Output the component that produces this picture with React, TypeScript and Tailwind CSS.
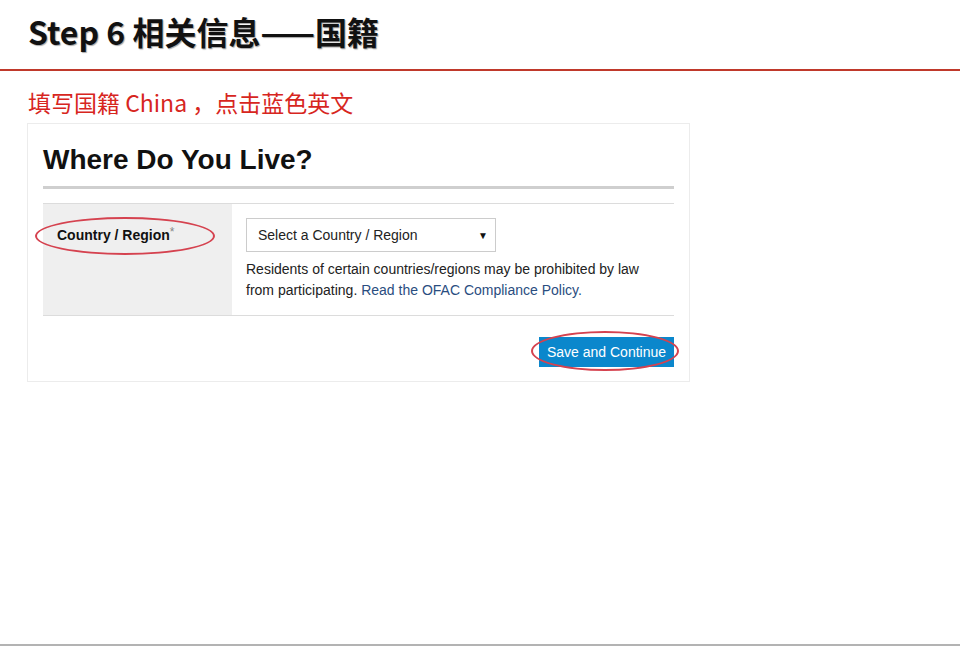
export default function App() {
  return (
    <div className="relative h-[648px] w-[960px] overflow-hidden bg-white font-['Liberation_Sans',Arial,sans-serif]">
      <div className="flex h-[69px] items-center pl-[28px] pb-[8px]">
        <h1 className="font-['Noto_Sans_CJK_SC',sans-serif] text-[32px] font-bold leading-none text-[#111] [text-shadow:1px_1px_1px_rgba(0,0,0,0.35)]">
          Step 6 相关信息——国籍
        </h1>
      </div>
      <div className="h-[2px] w-full bg-[#c0392b]" />

      <div className="pl-[28px] pt-[16px] font-['Noto_Sans_CJK_SC',sans-serif] text-[23px] leading-[30px] text-[#d7261e]">
        填写国籍 China ，点击蓝色英文
      </div>

      <div className="ml-[27px] mt-[6px] w-[663px] border border-[#ececec] px-[15px] pb-[14px] pt-[18px]">
        <h2 className="pb-[8px] text-[28px] font-bold leading-[36px] text-[#111]">Where Do You Live?</h2>
        <div className="h-[3px] w-full bg-[#cfcfcf]" />

        <div className="mt-[14px] flex h-[113px] border-y border-[#dcdcdc]">
          <div className="relative w-[189px] bg-[#efefef] pl-[14px] pt-[19px]">
            <span className="text-[14px] font-bold leading-[18px] text-[#111]">
              Country / Region<sup className="top-[-4px] text-[12px] font-normal text-[#888]">*</sup>
            </span>
            <div className="absolute left-[-8px] top-[13px] h-[38px] w-[180px] rounded-[50%] border-2 border-[#d5424f]" />
          </div>
          <div className="flex-1 pl-[14px] pt-[14px]">
            <div className="flex h-[34px] w-[250px] items-center justify-between border border-[#cccccc] pl-[11px] pr-[7px] text-[14px] text-[#222]">
              <span>Select a Country / Region</span>
              <span className="text-[10px] text-[#111]">▼</span>
            </div>
            <p className="mt-[7px] text-[14px] leading-[21px] text-[#222]">
              Residents of certain countries/regions may be prohibited by law
              <br />
              from participating. <span className="text-[#2a4d80]">Read the OFAC Compliance Policy.</span>
            </p>
          </div>
        </div>

        <div className="mt-[21px] flex justify-end">
          <div className="relative">
            <button className="h-[30px] w-[135px] bg-[#0b87cc] text-[14px] text-white">Save and Continue</button>
            <div className="absolute left-[-8px] top-[-6px] h-[40px] w-[148px] rounded-[50%] border-2 border-[#d5424f]" />
          </div>
        </div>
      </div>

      <div className="absolute bottom-[2px] left-0 h-[2px] w-full bg-[#b3b3b3]" />
    </div>
  );
}
